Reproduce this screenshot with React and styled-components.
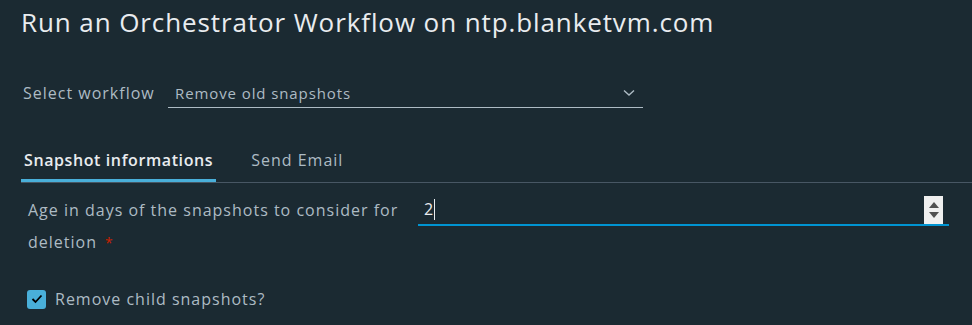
import React from "react";
import styled, { createGlobalStyle } from "styled-components";

const Global = createGlobalStyle`
  html, body {
    margin: 0;
    padding: 0;
    background: #1b2a32;
  }
  body {
    font-family: "Open Sans", "Liberation Sans", sans-serif;
    color: #adbbc4;
  }
`;

const Page = styled.div`
  width: 972px;
  height: 325px;
  overflow: hidden;
  background: #1b2a32;
`;

const Title = styled.h1`
  margin: 0;
  padding: 4px 0 0 21px;
  font-size: 26px;
  letter-spacing: 0.9px;
  line-height: 36px;
  font-weight: 400;
  color: #e9ecef;
`;

const SelectRow = styled.div`
  display: flex;
  align-items: center;
  margin: 38px 0 0 23px;
  height: 30px;
`;

const FieldLabel = styled.label`
  font-size: 16px;
  letter-spacing: 1px;
  color: #adbbc4;
  width: 145px;
  flex: none;
`;

const Select = styled.div`
  width: 475px;
  height: 30px;
  display: flex;
  align-items: center;
  justify-content: space-between;
  padding: 0 8px 0 7px;
  box-sizing: border-box;
  border-bottom: 1px solid #adbbc4;
  font-size: 15px;
  letter-spacing: 0.9px;
  color: #adbbc4;
`;

const Tabs = styled.div`
  display: flex;
  margin: 34px 0 0 21px;
  border-bottom: 1px solid #485764;
`;

const Tab = styled.div`
  padding: 0 3px;
  margin-right: 32px;
  height: 40px;
  line-height: 36px;
  font-size: 16px;
  letter-spacing: ${(p) => (p.$active ? 0.6 : 1)}px;
  font-weight: ${(p) => (p.$active ? 600 : 400)};
  color: ${(p) => (p.$active ? "#e9ecef" : "#adbbc4")};
  box-shadow: ${(p) => (p.$active ? "inset 0 -3px 0 #49afd9" : "none")};
`;

const FormRow = styled.div`
  display: flex;
  align-items: flex-start;
  margin: 11px 23px 0 28px;
`;

const AgeLabel = styled.div`
  width: 390px;
  font-size: 16px;
  letter-spacing: 1px;
  line-height: 32px;
  color: #adbbc4;
`;

const Required = styled.span`
  display: inline-block;
  color: #c92100;
  margin-left: 8px;
  font-size: 14px;
  line-height: 14px;
`;

const NumberBox = styled.div`
  flex: 1;
  height: 30px;
  display: flex;
  align-items: center;
  justify-content: space-between;
  border-bottom: 2px solid #0094d2;
  padding: 0 6px;
  font-size: 16px;
  color: #e9ecef;
`;

const Value = styled.span`
  display: flex;
  align-items: center;
`;

const Caret = styled.span`
  display: inline-block;
  width: 1px;
  height: 21px;
  background: #e9ecef;
  margin-left: 1px;
`;

const Spinner = styled.div`
  width: 19px;
  height: 28px;
  align-self: flex-end;
  background: #efefef;
  display: flex;
  flex-direction: column;
  align-items: center;
  justify-content: space-around;
  padding: 4px 0;
  box-sizing: border-box;
`;

const CheckRow = styled.label`
  display: flex;
  align-items: center;
  gap: 9px;
  margin: 30px 0 0 27px;
  font-size: 16px;
  letter-spacing: 1px;
  color: #adbbc4;
`;

const Box = styled.span`
  width: 19px;
  height: 19px;
  border-radius: 3px;
  background: #49afd9;
  display: flex;
  align-items: center;
  justify-content: center;
`;

export default function App() {
  return (
    <Page>
      <Global />
      <Title>Run an Orchestrator Workflow on ntp.blanketvm.com</Title>
      <SelectRow>
        <FieldLabel>Select workflow</FieldLabel>
        <Select>
          <span>Remove old snapshots</span>
          <svg width="12" height="8" viewBox="0 0 12 8">
            <path d="M1 1.5 L6 6 L11 1.5" fill="none" stroke="#adbbc4" strokeWidth="1.4" />
          </svg>
        </Select>
      </SelectRow>
      <Tabs>
        <Tab $active>Snapshot informations</Tab>
        <Tab>Send Email</Tab>
      </Tabs>
      <FormRow>
        <AgeLabel>
          Age in days of the snapshots to consider for
          <br />
          deletion
          <Required>*</Required>
        </AgeLabel>
        <NumberBox>
          <Value>
            2<Caret />
          </Value>
          <Spinner>
            <svg width="10" height="6" viewBox="0 0 10 6">
              <path d="M0 6 L5 0 L10 6 Z" fill="#505050" />
            </svg>
            <svg width="10" height="6" viewBox="0 0 10 6">
              <path d="M0 0 L5 6 L10 0 Z" fill="#505050" />
            </svg>
          </Spinner>
        </NumberBox>
      </FormRow>
      <CheckRow>
        <Box>
          <svg width="12" height="10" viewBox="0 0 12 10">
            <path d="M1.5 5 L4.5 8 L10.5 1.5" fill="none" stroke="#000" strokeWidth="1.8" />
          </svg>
        </Box>
        Remove child snapshots?
      </CheckRow>
    </Page>
  );
}
